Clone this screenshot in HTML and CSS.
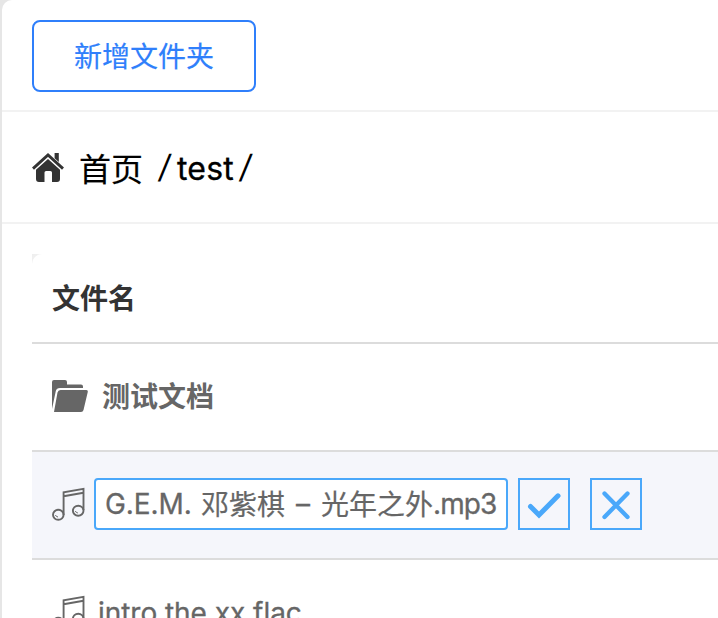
FILE: index.html
```html
<!DOCTYPE html>
<html lang="zh-CN">
<head>
<meta charset="utf-8">
<title>文件</title>
<link rel="stylesheet" href="styles.css">
</head>
<body>
<svg class="defs" width="0" height="0">
  <symbol id="music" viewBox="0 0 34 34">
    <g fill="none" stroke="currentColor" stroke-width="1.9">
      <path d="M11.600 28V5.300L31.500 1.800V23M11.600 9.300L31.500 5.800"/>
      <ellipse cx="6.300" cy="27.800" rx="5.300" ry="5"/>
      <ellipse cx="26.200" cy="23.700" rx="5.300" ry="5"/>
      <path d="M3.400 28q.8 1.800 2.600 2M23.300 24q.8 1.800 2.600 2" stroke-width="1"/>
    </g>
  </symbol>
</svg>
<main class="panel">
  <header class="toolbar"><button class="add">新增文件夹</button></header>
  <nav class="crumbs">
    <svg class="home" viewBox="0 0 32 30" fill="#333">
      <path d="M1 15.600L16 2L31 15.600" fill="none" stroke="#333" stroke-width="2.900"/>
      <path d="M22.600 0h4.200v9l-4.200-3.800z"/>
      <path d="M16 5.900L28 16.700V26q0 3-3 3H20V19.600q0-1.600-1.600-1.600h-4.300q-1.600 0-1.600 1.600V29H7q-3 0-3-3V16.700z"/>
    </svg>
    <span class="root">首页</span><span class="slash">/</span><span class="dir">test</span><span class="slash last">/</span>
  </nav>
  <section class="files">
    <div class="row head">文件名</div>
    <div class="row">
      <svg class="folder" viewBox="0 0 36 32" fill="#666">
        <path d="M0 29V2q0-2 2-2h11q2 0 2 2v2.500h14q2 0 2 2V8H8Q4.500 8 3.800 11z"/>
        <path d="M8.500 10H34q2.300 0 1.700 2.200L31.500 30q-.5 2-2.500 2H2L5.500 12.500Q6 10 8.500 10z"/>
      </svg>
      <span class="folder-name">测试文档</span>
    </div>
    <div class="row active">
      <svg class="note"><use href="#music"/></svg>
      <div class="edit"><span class="artist">G.E.M.</span><span class="cn">邓紫棋</span><span class="dash">–</span><span class="cn">光年之外</span><span class="ext">.mp3</span></div>
      <button class="act ok"><svg viewBox="0 0 48 48"><path d="M10.500 26.500L19 35L38 15.800" stroke-width="5"/></svg></button>
      <button class="act no"><svg viewBox="0 0 48 48"><path d="M12.500 13.500L35.500 37M35.500 13.500L12.500 37" stroke-width="4.300"/></svg></button>
    </div>
    <div class="row">
      <svg class="note"><use href="#music"/></svg>
      <span class="track">intro the xx flac</span>
    </div>
  </section>
</main>
</body>
</html>
```
FILE: styles.css
```css
* { box-sizing: border-box; }
body {
  margin: 0;
  height: 618px;
  overflow: hidden;
  background: #e6e6e6;
  font: 28px/40px "Noto Sans CJK SC", sans-serif;
  color: #666;
}
.defs { position: absolute; }
svg { display: block; flex: none; }
.panel {
  margin-left: 2px;
  height: 618px;
  overflow: hidden;
  background: #fff;
  border-top-left-radius: 10px;
}
.toolbar {
  height: 112px;
  padding: 20px 30px 0;
  border-bottom: 2px solid #f2f2f2;
}
.add {
  display: block;
  width: 224px;
  height: 72px;
  padding: 0 0 2px;
  border: 2px solid #2f7ffb;
  border-radius: 8px;
  background: #fff;
  color: #2f7ffb;
  font: inherit;
  -webkit-text-stroke: .2px currentColor;
}
.crumbs {
  display: flex;
  align-items: center;
  height: 112px;
  padding-left: 30px;
  border-bottom: 2px solid #f2f2f2;
  font-size: 32px;
  color: #000;
  white-space: nowrap;
}
.home { width: 32px; height: 30px; margin-top: 2px; }
.root { margin: 0 0 1px 15px; -webkit-text-stroke: .2px currentColor; }
.slash {
  width: 14px;
  margin: 0 4px 0 16px;
  font-family: Inter, sans-serif;
  transform: skewX(-8deg);
}
.dir {
  margin-top: 4px;
  font-family: Inter, sans-serif;
  letter-spacing: .2px;
  -webkit-text-stroke: .3px currentColor;
}
.slash.last { margin: 0 0 0 6px; }
.files {
  margin: 30px 0 0 30px;
  background: linear-gradient(135deg, #eee 0, #f2f2f2 8px, #fff 9px);
}
.row {
  display: flex;
  align-items: center;
  height: 108px;
  padding: 0 0 2px 20px;
  border-bottom: 2px solid #dcdcdc;
  background: #fff;
  white-space: nowrap;
}
.row.head {
  height: 90px;
  border-top-left-radius: 10px;
  font-weight: 700;
  color: #333;
}
.row.active { background: #f5f6fb; }
.folder { width: 36px; height: 32px; }
.folder-name { margin: 0 0 2px 14px; font-weight: 700; }
.note { width: 34px; height: 34px; }
.edit {
  display: flex;
  align-items: center;
  width: 414px;
  height: 52px;
  margin-left: 8px;
  padding: 0 0 1px 9px;
  border: 2px solid #4aa8fa;
  border-radius: 4px;
  background: #fff;
}
.cn { margin-bottom: 2px; -webkit-text-stroke: .2px currentColor; }
.artist, .dash, .ext, .track {
  font-family: Inter, sans-serif;
  -webkit-text-stroke: .3px currentColor;
}
.artist { width: 96px; letter-spacing: -.1px; }
.dash { width: 36px; text-align: center; }
.ext { letter-spacing: -.9px; }
.act {
  width: 52px;
  height: 52px;
  padding: 0;
  border: 2px solid #4aa8fa;
  background: transparent;
}
.act svg {
  width: 48px;
  height: 48px;
  fill: none;
  stroke: #4aa8fa;
  stroke-linecap: round;
}
.ok { margin-left: 10px; }
.no { margin-left: 20px; }
.track { margin: 1px 0 0 12px; letter-spacing: -.04px; }
```
